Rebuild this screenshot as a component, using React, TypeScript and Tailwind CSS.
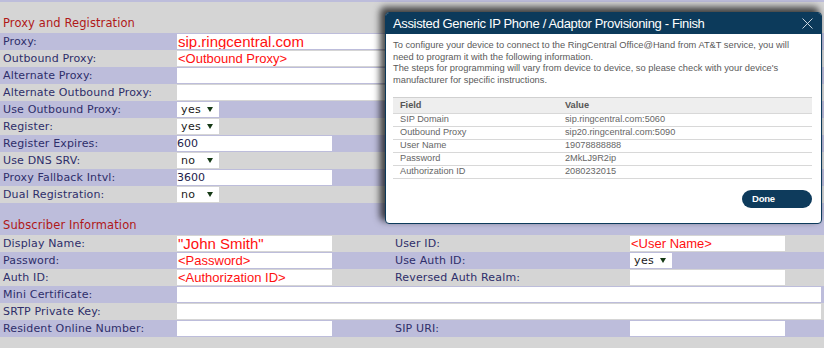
import React from "react";

const LAV = "bg-[#bdbddb]";
const GRAY = "bg-[#d5d5d5]";

function Label({ children }: { children?: React.ReactNode }) {
  return (
    <div className="w-[177px] shrink-0 pl-[3px] leading-[17px] text-[11px] tracking-[0.15px] text-[#2e2e6a] whitespace-nowrap">
      {children}
    </div>
  );
}

function TextInput({ w, red, big, dark }: { w: string; red?: string; big?: boolean; dark?: string }) {
  return (
    <div className={`${w} h-[15px] mt-[1px] bg-white overflow-hidden whitespace-nowrap shrink-0 flex items-center`}>
      {red ? (
        <span
          className={`pl-[1px] font-['Liberation_Sans',Arial,sans-serif] text-[#ff1010] leading-none ${big ? "text-[15px]" : "text-[13px]"}`}
        >
          {red}
        </span>
      ) : null}
      {dark ? <span className="text-[11px] leading-none text-[#1c1c4c]">{dark}</span> : null}
    </div>
  );
}

function Select({ value }: { value: string }) {
  return (
    <div className="w-[42px] h-[15px] mt-[1px] bg-white shrink-0 flex items-start">
      <span className="pl-[4px] text-[11px] leading-[15px] text-[#1a1a1a] tracking-[0.4px]">{value}</span>
      <svg width="6" height="5" viewBox="0 0 6 5" className={value === "yes" ? "ml-[6px] mt-[5px]" : "ml-[11px] mt-[5px]"}>
        <polygon points="0,0 6,0 3,5" fill="#163a16" />
      </svg>
    </div>
  );
}

function Row({ bg, children }: { bg: string; children: React.ReactNode }) {
  return <div className={`flex h-[17px] ${bg}`}>{children}</div>;
}

function RightLabel({ children }: { children: React.ReactNode }) {
  return (
    <div className="w-[240px] shrink-0 pl-[5px] leading-[17px] text-[11px] tracking-[0.15px] text-[#2e2e6a] whitespace-nowrap">
      {children}
    </div>
  );
}

function Heading({ bg, text, h }: { bg: string; text: string; h: string }) {
  return (
    <div className={`${h} ${bg} flex items-end pl-[3px] pb-[1px]`}>
      <span className="text-[11.5px] leading-[17px] text-[#b01818] tracking-[0.1px]">{text}</span>
    </div>
  );
}

function Gap() {
  return <div className="w-[58px] shrink-0" />;
}

export default function App() {
  return (
    <div className="relative w-[824px] h-[348px] overflow-hidden bg-[#d5d5d5] font-['DejaVu_Sans',Verdana,sans-serif]">
      <div className={`h-[2px] ${LAV}`} />
      <Heading bg={GRAY} h="h-[31px]" text="Proxy and Registration" />
      <Row bg={LAV}>
        <Label>Proxy:</Label>
        <TextInput w="w-[644px]" red="sip.ringcentral.com" big />
      </Row>
      <Row bg={GRAY}>
        <Label>Outbound Proxy:</Label>
        <TextInput w="w-[644px]" red="<Outbound Proxy>" />
      </Row>
      <Row bg={LAV}>
        <Label>Alternate Proxy:</Label>
        <TextInput w="w-[644px]" />
      </Row>
      <Row bg={GRAY}>
        <Label>Alternate Outbound Proxy:</Label>
        <TextInput w="w-[644px]" />
      </Row>
      <Row bg={LAV}>
        <Label>Use Outbound Proxy:</Label>
        <Select value="yes" />
      </Row>
      <Row bg={GRAY}>
        <Label>Register:</Label>
        <Select value="yes" />
      </Row>
      <Row bg={LAV}>
        <Label>Register Expires:</Label>
        <TextInput w="w-[155px]" dark="600" />
      </Row>
      <Row bg={GRAY}>
        <Label>Use DNS SRV:</Label>
        <Select value="no" />
      </Row>
      <Row bg={LAV}>
        <Label>Proxy Fallback Intvl:</Label>
        <TextInput w="w-[155px]" dark="3600" />
      </Row>
      <Row bg={GRAY}>
        <Label>Dual Registration:</Label>
        <Select value="no" />
      </Row>
      <Heading bg={LAV} h="h-[32px]" text="Subscriber Information" />
      <Row bg={GRAY}>
        <Label>Display Name:</Label>
        <TextInput w="w-[155px]" red={'"John Smith"'} big />
        <Gap />
        <RightLabel>User ID:</RightLabel>
        <TextInput w="w-[155px]" red="<User Name>" />
      </Row>
      <Row bg={LAV}>
        <Label>Password:</Label>
        <TextInput w="w-[155px]" red="<Password>" />
        <Gap />
        <RightLabel>Use Auth ID:</RightLabel>
        <Select value="yes" />
      </Row>
      <Row bg={GRAY}>
        <Label>Auth ID:</Label>
        <TextInput w="w-[155px]" red="<Authorization ID>" />
        <Gap />
        <RightLabel>Reversed Auth Realm:</RightLabel>
        <TextInput w="w-[155px]" />
      </Row>
      <Row bg={LAV}>
        <Label>Mini Certificate:</Label>
        <TextInput w="w-[644px]" />
      </Row>
      <Row bg={GRAY}>
        <Label>SRTP Private Key:</Label>
        <TextInput w="w-[644px]" />
      </Row>
      <Row bg={LAV}>
        <Label>Resident Online Number:</Label>
        <TextInput w="w-[155px]" />
        <Gap />
        <RightLabel>SIP URI:</RightLabel>
        <TextInput w="w-[155px]" />
      </Row>
      <div className={`h-[11px] ${GRAY}`} />

      {/* Dialog overlay */}
      <div className="absolute left-[385px] top-[12px] w-[437px] h-[212px] rounded-[4px] border border-[#0c3a5b] bg-white shadow-[-4px_-4px_7px_1px_rgba(0,0,0,0.7)] font-['Liberation_Sans',Arial,sans-serif] flex flex-col">
        <div className="h-[21px] bg-[#0c3a5b] rounded-t-[3px] flex items-center justify-between pl-[7px] pr-[8px]">
          <span className="text-white text-[13px] tracking-[-0.35px] whitespace-nowrap">
            Assisted Generic IP Phone / Adaptor Provisioning - Finish
          </span>
          <svg width="11" height="11" viewBox="0 0 11 11">
            <line x1="0.5" y1="0.5" x2="10.5" y2="10.5" stroke="#dfe6ee" strokeWidth="0.9" />
            <line x1="10.5" y1="0.5" x2="0.5" y2="10.5" stroke="#dfe6ee" strokeWidth="0.9" />
          </svg>
        </div>
        <div className="flex-1 pl-[7px] pr-[9px] pt-[6px] flex flex-col">
          <p className="text-[9.3px] leading-[11.5px] text-[#5a5a5a] whitespace-nowrap">
            To configure your device to connect to the RingCentral Office@Hand from AT&amp;T service, you will
            <br />
            need to program it with the following information.
            <br />
            The steps for programming will vary from device to device, so please check with your device's
            <br />
            manufacturer for specific instructions.
          </p>
          <div className="mt-[11px] text-[9.2px] text-[#666] border-t border-[#d0d0d0]">
            <div className="flex h-[16px] items-center bg-[#eeeeee] border-b border-[#d8d8d8] font-bold text-[#555]">
              <span className="w-[172px] pl-[7px]">Field</span>
              <span>Value</span>
            </div>
            {[
              ["SIP Domain", "sip.ringcentral.com:5060"],
              ["Outbound Proxy", "sip20.ringcentral.com:5090"],
              ["User Name", "19078888888"],
              ["Password", "2MkLJ9R2ip"],
              ["Authorization ID", "2080232015"],
            ].map(([f, v]) => (
              <div key={f} className="flex h-[13px] items-center border-b border-[#d8d8d8]">
                <span className="w-[172px] pl-[7px]">{f}</span>
                <span>{v}</span>
              </div>
            ))}
          </div>
          <div className="flex justify-end mt-[11px]">
            <div className="w-[70px] h-[18px] rounded-full bg-[#0e3b5c] flex items-center pl-[10px]">
              <span className="text-white font-bold text-[9.5px] tracking-[-0.2px]">Done</span>
            </div>
          </div>
        </div>
      </div>
    </div>
  );
}
